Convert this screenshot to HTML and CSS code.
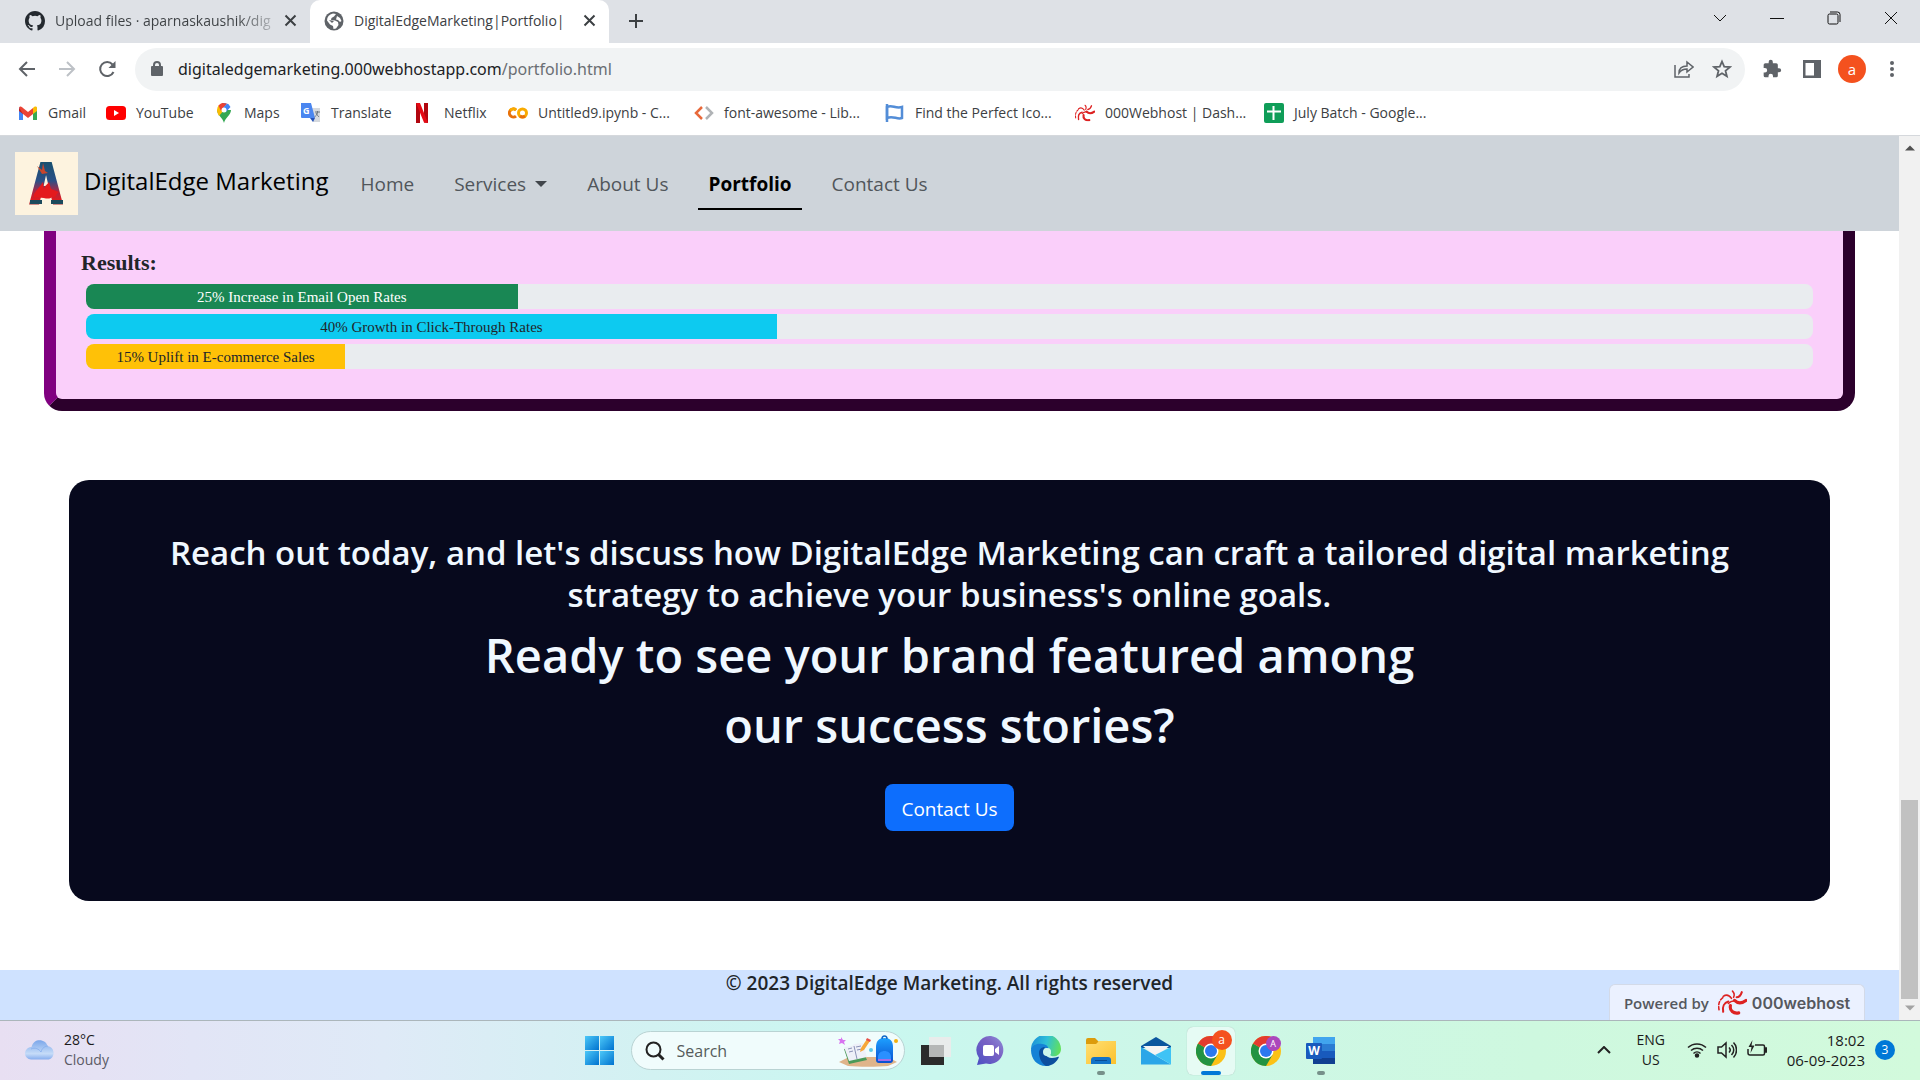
FILE: index.html
```html
<!DOCTYPE html>
<html lang="en">
<head>
<meta charset="utf-8">
<meta name="viewport" content="width=device-width, initial-scale=1">
<title>DigitalEdgeMarketing|Portfolio|</title>
<link rel="stylesheet" href="styles.css">
</head>
<body>
<svg class="defs" width="0" height="0" aria-hidden="true">
  <defs>
    <symbol id="swirl" viewBox="0 0 28 24">
      <g fill="none" stroke="#dd2222" stroke-linecap="round">
        <path d="M12 15c-1 5 3 8 8 7" stroke-width="3"/>
        <path d="M16 10c3 3 7 3 11 0" stroke-width="3"/>
        <path d="M10 13c3-3 5-3 7-2" stroke-width="1.500"/>
        <path d="M10 11c-4 1-6 5-5 10" stroke-width="2"/>
        <path d="M1 19c-1-5 0-9 4-12" stroke-width="1.500" stroke-dasharray="3 2"/>
        <path d="M13 8C11 5 8 4 5 6" stroke-width="1.500"/>
        <path d="M15 7c1-2 1-4-1-6" stroke-width="1.500"/>
        <path d="M18 7c3 0 4-2 5-5" stroke-width="2"/>
      </g>
    </symbol>
    <symbol id="chrome" viewBox="0 0 30 30">
      <circle cx="15" cy="15" r="15" fill="#fbc116"/>
      <path d="M15 15 2 7.500A15 15 0 0 0 15 30l6.500-11.200z" fill="#229342"/>
      <path d="M15 15 2 7.500a15 15 0 0 1 26 0z" fill="#e33b2e"/>
      <circle cx="15" cy="15" r="7.500" fill="#fff"/>
      <circle cx="15" cy="15" r="6" fill="#2b78ef"/>
    </symbol>
    <symbol id="cross" viewBox="0 0 12 12"><path d="M2 2l8 8M10 2l-8 8" stroke="#3c4043" stroke-width="1.600" fill="none"/></symbol>
    <linearGradient id="letter" x1="0" y1="0" x2="0" y2="1">
      <stop offset=".15" stop-color="#17506f"/><stop offset=".45" stop-color="#2b4f86"/><stop offset=".6" stop-color="#a12a4a"/><stop offset=".75" stop-color="#e01b1f"/><stop offset="1" stop-color="#1c4a5c"/>
    </linearGradient>
    <linearGradient id="win" x1="0" y1="0" x2="1" y2="1"><stop offset="0" stop-color="#4cc8f8"/><stop offset="1" stop-color="#0072cf"/></linearGradient>
    <linearGradient id="chat" x1="0" y1="1" x2="1" y2="0"><stop offset="0" stop-color="#4b4fc4"/><stop offset=".6" stop-color="#7a62c4"/><stop offset="1" stop-color="#8f8fd8"/></linearGradient>
    <linearGradient id="edge" x1="0" y1=".3" x2="1" y2=".5"><stop offset="0" stop-color="#1a8fd8"/><stop offset=".5" stop-color="#2fc0d8"/><stop offset="1" stop-color="#62e05c"/></linearGradient>
    <linearGradient id="folder" x1="0" y1="0" x2="1" y2="1"><stop offset="0" stop-color="#ffdf73"/><stop offset="1" stop-color="#fcc12d"/></linearGradient>
    <linearGradient id="cloud" x1="0" y1="0" x2="0" y2="1"><stop offset="0" stop-color="#7ba7ea"/><stop offset=".7" stop-color="#c6dcf8"/><stop offset="1" stop-color="#86adee"/></linearGradient>
    <linearGradient id="pack" x1="0" y1="0" x2="0" y2="1"><stop offset="0" stop-color="#1da0ff"/><stop offset="1" stop-color="#0a4fd0"/></linearGradient>
  </defs>
</svg>
<div class="browser">
  <div class="tabstrip">
    <div class="tab">
      <svg class="fav" viewBox="0 0 16 16" fill="#24292f"><path d="M8 0C3.580 0 0 3.580 0 8c0 3.540 2.290 6.530 5.470 7.590.4.070.55-.17.55-.38 0-.19-.01-.82-.01-1.490-2.010.37-2.530-.49-2.690-.94-.09-.23-.48-.94-.82-1.130-.28-.15-.68-.52-.01-.53.63-.01 1.080.58 1.230.82.72 1.210 1.870.87 2.330.66.07-.52.28-.87.51-1.070-1.780-.2-3.640-.89-3.640-3.950 0-.87.31-1.590.82-2.150-.08-.2-.36-1.020.08-2.120 0 0 .67-.21 2.200.82a7.600 7.600 0 0 1 4 0c1.530-1.040 2.200-.82 2.200-.82.44 1.100.16 1.920.08 2.120.51.56.82 1.270.82 2.150 0 3.070-1.870 3.750-3.650 3.950.29.25.54.73.54 1.480 0 1.070-.01 1.930-.01 2.200 0 .21.15.46.55.38A8 8 0 0 0 16 8c0-4.420-3.580-8-8-8z"/></svg>
      <span class="tab-title fade">Upload files · aparnaskaushik/dig</span>
      <button class="tab-close" aria-label="Close tab"><svg width="15" height="15"><use href="#cross"/></svg></button>
    </div>
    <div class="tab active">
      <svg class="fav" viewBox="0 0 20 20"><circle cx="10" cy="10" r="9.500" fill="#5f6368"/><path d="M9 2.500 12 3 10 5.500 7.500 7 7 9l4 .5 3 1.500.5 3-2.500 3.500-2.500.5-.5-3-3-1.500L3 9.500C3 6 5 3.500 9 2.500z" fill="#fff"/><path d="M13 5l3 2 1.500 3-1.500 1-2-2-2-.5z" fill="#fff"/><path d="M5 9l5 1-2 2z" fill="#5f6368"/></svg>
      <span class="tab-title">DigitalEdgeMarketing|Portfolio|</span>
      <button class="tab-close" aria-label="Close tab"><svg width="15" height="15"><use href="#cross"/></svg></button>
    </div>
    <button class="newtab" aria-label="New tab"><svg width="16" height="16" viewBox="0 0 16 16"><path d="M8 1v14M1 8h14" stroke="#3c4043" stroke-width="2"/></svg></button>
    <div class="winctl">
      <button aria-label="Search tabs"><svg width="14" height="14" viewBox="0 0 14 14"><path d="M1 4l6 6 6-6"/></svg></button>
      <button aria-label="Minimize"><svg width="14" height="14" viewBox="0 0 14 14"><path d="M0 7.500h14"/></svg></button>
      <button aria-label="Restore"><svg width="14" height="14" viewBox="0 0 14 14"><rect x="1" y="3" width="10" height="10" rx="1.500"/><path d="M3 1h7.500a2.500 2.500 0 0 1 2.500 2.500V11"/></svg></button>
      <button aria-label="Close"><svg width="14" height="14" viewBox="0 0 14 14"><path d="M1 1l12 12M13 1L1 13"/></svg></button>
    </div>
  </div>

  <div class="toolbar">
    <button aria-label="Back"><svg width="18" height="18" viewBox="0 0 18 18"><path d="M17 9H2M9 2L2 9l7 7" fill="none" stroke="#5f6368" stroke-width="2"/></svg></button>
    <button aria-label="Forward"><svg width="18" height="18" viewBox="0 0 18 18"><path d="M1 9h15M9 2l7 7-7 7" fill="none" stroke="#bdc1c6" stroke-width="2"/></svg></button>
    <button aria-label="Reload"><svg width="18" height="18" viewBox="0 0 18 18"><path d="M15.500 12A7 7 0 1 1 14.500 4.500" fill="none" stroke="#5f6368" stroke-width="2"/><path d="M17.500 1v7h-7z" fill="#5f6368"/></svg></button>
    <div class="omnibox">
      <svg width="12" height="16" viewBox="0 0 12 16"><path d="M3 6V4a3 3 0 0 1 6 0v2" fill="none" stroke="#5f6368" stroke-width="2"/><rect x="0" y="5" width="12" height="10" rx="1" fill="#5f6368"/></svg>
      <span class="url" role="textbox" contenteditable="true" spellcheck="false" aria-label="Address">digitaledgemarketing.000webhostapp.com<span>/portfolio.html</span></span>
      <svg class="share" width="20" height="18" viewBox="0 0 20 18" fill="none" stroke="#5f6368" stroke-width="1.500"><path d="M1 5v12h14v-3"/><path d="M5 13c0-5 3-7 8-7V2l6 5-6 5V9c-4 0-6 1-8 4z"/></svg>
      <svg width="20" height="20" viewBox="0 0 20 20"><path d="M10 2.500l2.200 5.200 5.600.4-4.300 3.700 1.400 5.500-4.900-3-4.900 3 1.400-5.500L2.200 8.100l5.600-.4z" fill="none" stroke="#5f6368" stroke-width="1.800"/></svg>
    </div>
    <button aria-label="Extensions"><svg width="20" height="20" viewBox="0 0 24 24" fill="#5f6368"><path d="M20.500 11H19V7a2 2 0 0 0-2-2h-4V3.500a2.500 2.500 0 0 0-5 0V5H4a2 2 0 0 0-2 2v3.800h1.500a2.700 2.700 0 0 1 0 5.400H2V20a2 2 0 0 0 2 2h3.800v-1.500a2.700 2.700 0 0 1 5.400 0V22H17a2 2 0 0 0 2-2v-4h1.500a2.500 2.500 0 0 0 0-5z"/></svg></button>
    <button aria-label="Side panel"><svg width="18" height="18" viewBox="0 0 18 18"><path d="M0 0h18v18H0zM2.500 3v12.500H11V3z" fill="#5f6368" fill-rule="evenodd"/></svg></button>
    <button class="avatar" aria-label="Profile">a</button>
    <button aria-label="Menu"><svg width="18" height="18" viewBox="0 0 18 18" fill="#5f6368"><circle cx="9" cy="3" r="2"/><circle cx="9" cy="9" r="2"/><circle cx="9" cy="15" r="2"/></svg></button>
  </div>

  <nav class="bookmarks" aria-label="Bookmarks">
    <a href="#"><svg viewBox="0 0 20 20"><path d="M1 4v13h4V9z" fill="#4285f4"/><path d="M19 4v13h-4V9z" fill="#34a853"/><path d="M1 5.500V8l4 3V5z" fill="#c5221f"/><path d="M15 5v6l4-3V5.500C19 3 17 3 15 5z" fill="#fbbc04"/><path d="M1 4.500C2 3 3 3 5 5l5 4 5-4v6l-5 4-5-4z" fill="#ea4335"/></svg>Gmail</a>
    <a href="#"><svg viewBox="0 0 20 20"><rect x="0" y="3" width="20" height="14" rx="3.500" fill="#f00"/><path d="M8 7v6l5-3z" fill="#fff"/></svg>YouTube</a>
    <a href="#"><svg viewBox="0 0 20 20"><path d="M10 20C9 15 3 12 3 7h14c0 5-6 8-7 13z" fill="#34a853"/><path d="M3 7a7 7 0 0 1 2-5l5 5-5 6C4 11 3 9 3 7z" fill="#fbbc04"/><path d="M4.500 2.500A7 7 0 0 1 13 .7L7 8z" fill="#ea4335"/><path d="M9 0a7 7 0 0 1 7.500 4L12 9 8 6l5-5.500z" fill="#4285f4"/><circle cx="10" cy="7" r="2.500" fill="#fff"/></svg>Maps</a>
    <a href="#"><svg viewBox="0 0 20 20"><path d="M8 5h11v14h-7z" fill="#d5d9de"/><path d="M0 0h10l4 15H1a1 1 0 0 1-1-1z" fill="#4a86f0"/><path d="M9 15h5l-2 4z" fill="#2352b8"/><text x="2" y="11" font-size="9" font-weight="700" fill="#fff">G</text><path d="M14 9h5M16.500 8v1c0 3-2 4-3 5M15 10c1 2 2 3 3 4" stroke="#6b7680" fill="none"/></svg>Translate</a>
    <a href="#"><svg class="wide" viewBox="0 0 20 20"><path d="M4 0h4v20l-4 .2zM12 0h4v20l-4-.5z" fill="#b1060f"/><path d="M4 0h4l8 20-4-.5z" fill="#e50914"/></svg>Netflix</a>
    <a href="#"><svg viewBox="0 0 20 20" fill="none" stroke-width="3"><circle cx="14.500" cy="10" r="4" stroke="#f9ab00"/><path d="M8 7a4 4 0 1 0 0 6" stroke="#e8710a"/><path d="M8 7a4 4 0 0 0-6 .5" stroke="#f9ab00"/><path d="M12 13a4 4 0 0 0 5 0" stroke="#e8710a"/></svg>Untitled9.ipynb - C...</a>
    <a href="#"><svg viewBox="0 0 20 20" fill="none" stroke-width="2.500"><path d="M8 4l-6 6 6 6" stroke="#e8693a"/><path d="M12 4l6 6-6 6" stroke="#b0b3b6"/></svg>font-awesome - Lib...</a>
    <a href="#"><svg viewBox="0 0 20 20" fill="none" stroke="#538dd7" stroke-width="2.500"><path d="M2 1v18"/><path d="M2 4c5-3 8 2 15 0v11c-5 2-9-3-15 0z"/></svg>Find the Perfect Ico...</a>
    <a href="#"><svg viewBox="0 0 28 24"><use href="#swirl"/></svg>000Webhost | Dash...</a>
    <a href="#"><svg viewBox="0 0 20 20"><rect width="20" height="20" rx="2" fill="#0f9d58"/><path d="M9.500 3v14M3 8.500h14" stroke="#fff" stroke-width="2"/></svg>July Batch - Google...</a>
  </nav>

  <div class="viewport">
    <div class="page">
      <header class="site-nav">
        <a class="brand" href="#">
          <svg class="logo" viewBox="0 0 63 63"><rect width="63" height="63" fill="#fdf3df"/><text x="31" y="51" text-anchor="middle" font-family="DejaVu Sans Mono" font-weight="700" font-size="55" fill="url(#letter)" stroke="url(#letter)" stroke-width="2">A</text><path d="M15 48h12v4H15zM36 48h12v4H36z" fill="#1c4a5c"/><path d="M22 14l5 4 1-7 2 8 3 2-6 1z" fill="#c8452c"/><path d="M19 42c3-5 6-7 9-12l1 7c1-4 3-4 5-7l2 7 8 3c-4 3-2 6-7 5-4 4-9-1-18 1z" fill="#e41a1d"/></svg>
          <span>DigitalEdge Marketing</span>
        </a>
        <nav class="links" aria-label="Main">
          <a href="#">Home</a>
          <a href="#" class="drop">Services</a>
          <a href="#">About Us</a>
          <a href="#" class="current">Portfolio</a>
          <a href="#">Contact Us</a>
        </nav>
      </header>

      <section class="case">
        <h3>Results:</h3>
        <div class="progress"><div class="bar green" style="width:25%">25% Increase in Email Open Rates</div></div>
        <div class="progress"><div class="bar cyan" style="width:40%">40% Growth in Click-Through Rates</div></div>
        <div class="progress"><div class="bar amber" style="width:15%">15% Uplift in E-commerce Sales</div></div>
      </section>

      <section class="cta">
        <h2>Reach out today, and let's discuss how DigitalEdge Marketing can craft a tailored digital marketing strategy to achieve your business's online goals.</h2>
        <h1>Ready to see your brand featured among our success stories?</h1>
        <button class="btn">Contact Us</button>
      </section>

      <footer class="site-footer">© 2023 DigitalEdge Marketing. All rights reserved</footer>
      <a class="powered" href="#">Powered by <svg width="29" height="25"><use href="#swirl"/></svg><b>000webhost</b></a>
    </div>
    <div class="scrollbar">
      <svg width="10" height="6" viewBox="0 0 10 6"><path d="M0 5.500L5 .5l5 5z" fill="#505050"/></svg>
      <div class="track"><div class="thumb"></div></div>
      <svg width="10" height="6" viewBox="0 0 10 6"><path d="M0 .5h10l-5 5z" fill="#a3a3a3"/></svg>
    </div>
  </div>
</div>

<div class="taskbar">
  <div class="weather">
    <svg width="30" height="20" viewBox="0 0 30 20"><path d="M6 19.500A6 6 0 0 1 6.500 7C8 2 11 .3 14.500.3c4 0 7 2.200 8 5.700a7 7 0 0 1 1.500 13.500z" fill="url(#cloud)"/><path d="M6 9c4-2 8 0 10 3 1-4 4-6 7-6" stroke="#86aeee" fill="none" opacity=".8"/></svg>
    <div><div>28°C</div><div class="dim">Cloudy</div></div>
  </div>
  <div class="apps">
    <button aria-label="Start"><svg viewBox="0 0 30 30" fill="url(#win)"><rect x="0" y="0" width="14" height="14"/><rect x="15" y="0" width="14" height="14"/><rect x="0" y="15" width="14" height="14"/><rect x="15" y="15" width="14" height="14"/></svg></button>
    <label class="search">
      <svg width="20" height="20" viewBox="0 0 20 20" fill="none" stroke="#222"><circle cx="8.500" cy="8.500" r="7" stroke-width="2"/><path d="M13.500 13.500l5 5" stroke-width="3"/></svg>
      <input type="text" placeholder="Search" aria-label="Search">
      <svg width="60" height="32" viewBox="0 0 60 32"><path d="M1 27l10-5h39l9 5-9 4c-10 1-30 1-40 0z" fill="#dfb48a"/><path d="M6 14l17-3 6 14-18 4z" fill="#4a9a58"/><path d="M6 12l8-1 2-2 9-1 4 14-18 4z" fill="#eef0f8"/><path d="M16 11l3 13M10 14l4-1M11 17l4-1M18 12l5-1M19 15l5-1" stroke="#8c93b8" fill="none"/><path d="M22 17l1-4 6-9 3 2-6 9z" fill="#f6a83a"/><path d="M28 5l1-2 4 2-1 2z" fill="#e8504a"/><path d="M3 2l2 3 3 0-2 2 1 3-3-2-3 1 1-3-2-2 3 0z" fill="#d873f0"/><circle cx="33" cy="15" r="2" fill="#5cc9e8"/><circle cx="58" cy="6" r="2" fill="#f4b10f"/><path d="M38 25V12c0-6 3-9 8.500-9s8.500 3 8.500 9v13c0 2-1 3-3 3H41c-2 0-3-1-3-3z" fill="url(#pack)"/><path d="M44 4c0-4 5-4 5 0" fill="none" stroke="#1468c8" stroke-width="1.500"/><path d="M40 24v-2c0-8 13-8 13 0v2z" fill="#2a90ff"/><path d="M40 24h13v2H40z" fill="#a56de8"/></svg>
    </label>
    <button aria-label="Task view"><svg viewBox="0 0 30 30"><rect x="0" y="9" width="23" height="20" fill="#2b2b2b"/><rect x="8" y="1" width="22" height="20" fill="#e9eceb"/><rect x="8" y="9" width="15" height="12" fill="#b5b7b6"/></svg></button>
    <button aria-label="Chat"><svg viewBox="0 0 30 30"><path d="M15 0a14 14 0 1 1-5 27.500L1 29l2-7A14 14 0 0 1 15 0z" fill="url(#chat)"/><rect x="7" y="9" width="11" height="11" rx="2" fill="#fff"/><path d="M19 13l4-3v9l-4-3z" fill="#fff"/></svg></button>
    <button aria-label="Edge"><svg viewBox="0 0 30 30"><path d="M0 14A15 15 0 0 1 30 13c0 7-8 9-11 6 2-2 1-8-5-8C7 10 1 12 0 14z" fill="url(#edge)"/><path d="M0 14c1-5 6-7 11-6 5 0 7 4 7 6-2-3-8-2-7 5 1 6 5 9 8 11h-4C6 30 0 23 0 14z" fill="#1582d6"/><path d="M8 17c0-4 3-6 6-6-3 4 0 11 7 11 4 0 6-2 7-1-2 5-7 9-13 9-4-2-7-8-7-13z" fill="#0d4f9e"/><circle cx="16" cy="16" r="4" fill="#cef7ec"/></svg></button>
    <button class="running" aria-label="File Explorer"><svg viewBox="0 0 30 30"><path d="M0 12V4a2 2 0 0 1 2-2h7l4 4h15v4z" fill="#dc9c0c"/><path d="M0 8h10l3-3h17v23H0z" fill="url(#folder)"/><path d="M5 28v-4a3 3 0 0 1 3-3h14a3 3 0 0 1 3 3v4z" fill="#1273c8"/><path d="M9 24.500h12" stroke="#0a4c94"/></svg></button>
    <button aria-label="Mail"><svg viewBox="0 0 30 30"><path d="M0 10L15 1l15 9v2H0z" fill="#0a569e"/><path d="M2 10h26l-13 11z" fill="#f4f4f4"/><path d="M0 11l30 17.500H0z" fill="#2ba6e8"/><path d="M30 11L14 19l16 9.500z" fill="#3fc3f5"/></svg></button>
    <button class="running focused" aria-label="Chrome"><svg viewBox="0 0 30 30"><use href="#chrome"/></svg><span class="who big">a</span></button>
    <button aria-label="Chrome profile A"><svg viewBox="0 0 30 30"><use href="#chrome"/></svg><span class="who">A</span></button>
    <button class="running" aria-label="Word"><svg viewBox="0 0 30 30"><rect x="7" y="1" width="22" height="8" fill="#41a5ee"/><rect x="7" y="8" width="22" height="7" fill="#2b7cd3"/><rect x="7" y="15" width="22" height="7" fill="#185abd"/><rect x="7" y="22" width="22" height="6" fill="#103f91"/><rect x="0" y="7" width="16" height="16" rx="1" fill="#185abd"/><text x="8" y="19" text-anchor="middle" font-size="12" font-weight="700" fill="#fff">W</text></svg></button>
  </div>
  <div class="tray">
    <svg class="up" width="14" height="8" viewBox="0 0 14 8"><path d="M1 7l6-6 6 6"/></svg>
    <div class="lang"><div>ENG</div><div>US</div></div>
    <svg width="20" height="20" viewBox="0 0 20 20"><path d="M1 7.500a13 13 0 0 1 18 0M4 10.500a9 9 0 0 1 12 0M6.500 13.500a5 5 0 0 1 7 0"/><circle cx="10" cy="15.500" r="1.500" fill="#222"/></svg>
    <svg width="20" height="20" viewBox="0 0 20 20"><path d="M1 7v6h3.500L9 17V3L4.500 7zM12 7.500c1.500 1.500 1.500 3.500 0 5M14.500 5c3 3 3 7 0 10M16.500 2.500c4 4 4 11 0 15"/></svg>
    <svg width="20" height="20" viewBox="0 0 20 20"><path d="M8 5h8a1.500 1.500 0 0 1 1.500 1.500v7A1.500 1.500 0 0 1 16 15H3a2 2 0 0 1-2-2V9"/><path d="M18 8h1.500v4H18z"/><path d="M5.500 0 1.500 7h3l-1 6 4-7.500h-3z" fill="#222" stroke="none"/></svg>
    <div class="clock"><div>18:02</div><div>06-09-2023</div></div>
    <div class="count">3</div>
  </div>
</div>
</body>
</html>
```
FILE: styles.css
```css
* { box-sizing: border-box; }
body {
  margin: 0;
  height: 100vh;
  display: flex;
  flex-direction: column;
  overflow: hidden;
  font-family: "Open Sans", "Noto Sans", sans-serif;
  font-size: 14px;
  color: #212529;
  background: #fff;
}
a { color: inherit; text-decoration: none; }
button {
  border: 0;
  padding: 0;
  background: none;
  font: inherit;
  color: inherit;
  display: flex;
  align-items: center;
  justify-content: center;
}
svg { flex: none; display: block; }
.defs { position: absolute; }
.browser { flex: 1; min-height: 0; display: flex; flex-direction: column; }

/* Tab strip */
.tabstrip { display: flex; height: 43px; background: #dee1e6; color: #3c4043; }
.tab {
  display: flex;
  align-items: center;
  width: 310px;
  padding: 0 12px 2px 25px;
}
.tab.active {
  width: 299px;
  padding: 0 12px 2px 14px;
  background: #fff;
  border-radius: 10px 10px 0 0;
}
.fav { width: 20px; height: 20px; margin-right: 10px; }
.tab-title { flex: 1; min-width: 0; white-space: nowrap; }
.fade {
  color: transparent;
  background: linear-gradient(90deg, #3c4043 82%, #c4c7cc 100%);
  -webkit-background-clip: text;
  background-clip: text;
}
.tab-close { width: 16px; height: 16px; margin-left: 5px; }
.newtab { width: 54px; padding-bottom: 1px; }
.winctl { margin-left: auto; display: flex; padding-right: 1px; }
.winctl button { width: 57px; height: 36px; }
.winctl svg { fill: none; stroke: #111; }

/* Toolbar */
.toolbar { display: flex; align-items: center; height: 52px; padding: 0 8px 0 7px; }
.toolbar button { width: 40px; height: 40px; }
.omnibox {
  flex: 1;
  display: flex;
  align-items: center;
  height: 43px;
  margin: 0 7px 0 8px;
  padding: 0 13px 0 16px;
  border-radius: 22px;
  background: #f1f3f4;
}
.url { flex: 1; padding-left: 15px; font-family: "Noto Sans", sans-serif; font-size: 16px; color: #202124; }
.url span { color: #6a6e73; }
.share { margin-right: 18px; }
.toolbar .avatar {
  width: 28px;
  height: 28px;
  margin: 0 6px;
  border-radius: 50%;
  background: #f4511e;
  color: #fff;
  font-size: 15px;
}

/* Bookmarks */
.bookmarks {
  display: grid;
  grid-template-columns: 88px 108px 87px 109px 98px 186px 191px 190px 189px auto;
  height: 41px;
  padding-left: 18px;
  padding-bottom: 5px;
  border-bottom: 1px solid #d5d8dc;
  color: #3c4043;
}
.bookmarks a { display: flex; align-items: center; gap: 10px; white-space: nowrap; }
.bookmarks svg { width: 20px; height: 20px; }
.bookmarks .wide { width: 24px; }

/* Web page */
.viewport { flex: 1; min-height: 0; display: flex; }
.page { flex: 1; position: relative; display: flex; flex-direction: column; overflow: hidden; }
.site-nav {
  display: flex;
  align-items: center;
  height: 95px;
  padding-left: 15px;
  background: #ced4da;
}
.brand { display: flex; align-items: center; gap: 6px; font-size: 24px; line-height: 30px; color: #000; }
.brand span { padding-bottom: 5px; }
.logo { width: 63px; height: 63px; }
.links { display: flex; gap: 20px; margin-left: 22px; }
.links a {
  padding: 11px 10px 9px;
  font-size: 19px;
  line-height: 30px;
  color: #51565b;
  border-bottom: 2px solid transparent;
}
.links .current { font-weight: 700; color: #000; border-color: #000; }
.links .drop { display: flex; align-items: center; gap: 9px; }
.drop::after {
  content: "";
  border: 6px solid transparent;
  border-top-color: #41464b;
  border-bottom: 0;
}

.case {
  margin: 0 44px;
  padding: 15px 30px 30px 25px;
  border: 12px solid #2c002c;
  border-top: 0;
  border-left-color: #800080;
  border-radius: 0 0 18px 18px;
  background: #facffa;
  font-family: "Liberation Serif", serif;
}
.case h3 { margin: 0 0 5px; font-size: 22px; line-height: 33px; }
.progress {
  height: 25px;
  margin: 0 0 5px 5px;
  border-radius: 8px;
  overflow: hidden;
  background: #e9ecef;
}
.progress:last-child { margin-bottom: 0; }
.bar { height: 100%; text-align: center; font-size: 15px; line-height: 26px; white-space: nowrap; }
.green { background: #198754; color: #fff; }
.cyan { background: #0dcaf0; }
.amber { background: #ffc107; }

.cta {
  display: flex;
  flex-direction: column;
  align-items: center;
  margin: 69px 69px 0;
  padding: 52px 50px 70px;
  border-radius: 20px;
  background: #07091d;
  color: #f0f8ff;
  text-align: center;
}
.cta h2 { margin: 0 0 4px; font-size: 33px; line-height: 42px; font-weight: 600; }
.cta h1 { margin: 0 0 24px; max-width: 1000px; font-size: 47px; line-height: 70px; font-weight: 600; }
.btn {
  height: 47px;
  padding: 2px 16px 0;
  border-radius: 8px;
  background: #0d6efd;
  color: #fff;
  font-size: 19px;
}
.site-footer {
  margin-top: 69px;
  flex: 1;
  background: #cfe2ff;
  text-align: center;
  font-size: 19px;
  line-height: 26px;
  font-weight: 600;
}
.powered {
  position: absolute;
  right: 34px;
  bottom: 0;
  display: flex;
  align-items: center;
  justify-content: center;
  gap: 9px;
  width: 256px;
  height: 36px;
  border: 1px solid #d3dae8;
  border-bottom: 0;
  border-radius: 6px 6px 0 0;
  background: #ebf1ff;
  color: #55585e;
  font-size: 15px;
  font-weight: 600;
}
.powered b { margin-left: -4px; font-family: "Inter", sans-serif; font-size: 16px; font-weight: 600; }

.scrollbar {
  width: 21px;
  display: flex;
  flex-direction: column;
  align-items: center;
  padding: 9px 0;
  background: #f1f1f1;
}
.track { flex: 1; width: 17px; display: flex; flex-direction: column; justify-content: flex-end; padding: 6px 0; }
.thumb { height: 199px; background: #c1c1c1; }

/* Taskbar */
.taskbar {
  height: 60px;
  display: grid;
  grid-template-columns: 1fr auto 1fr;
  align-items: center;
  border-top: 1px solid #abb6bb;
  background: linear-gradient(90deg, #e8dff2 0, #e2e5f6 10%, #dfeaf7 20%, #d2f2f2 34%, #c9f7f0 45%, #cdf7e8 60%, #cef8df 80%, #d2fadc 100%);
  color: #1b1b1b;
}
.weather { display: flex; align-items: center; gap: 9px; padding: 0 0 2px 25px; line-height: 20px; }
.dim { color: #5b5b66; }
.apps { display: flex; gap: 7px; }
.apps button { position: relative; width: 48px; height: 48px; border-radius: 6px; }
.apps button > svg { width: 30px; height: 30px; }
.search {
  display: flex;
  align-items: center;
  width: 274px;
  height: 39px;
  align-self: center;
  padding: 0 6px 0 13px;
  border: 1px solid #b9d3d3;
  border-radius: 20px;
  background: #f0fcfc;
}
.search input {
  flex: 1;
  min-width: 0;
  padding: 0 0 0 12px;
  border: 0;
  background: none;
  font: 16px "Open Sans", sans-serif;
}
.search input::placeholder { color: #555b5b; }
.focused { background: #e6fbf4; box-shadow: 0 0 1px #9fb8b0; }
.running::after {
  content: "";
  position: absolute;
  bottom: 0;
  width: 8px;
  height: 4px;
  border-radius: 2px;
  background: #76908a;
}
.focused::after { width: 20px; background: #0078d7; }
.who {
  position: absolute;
  top: 9px;
  right: 9px;
  width: 15px;
  height: 15px;
  border-radius: 50%;
  background: #ab47bc;
  color: #fff;
  font-size: 9px;
  line-height: 15px;
  text-align: center;
}
.big { top: 3px; right: 3px; width: 20px; height: 20px; background: #f4511e; font-size: 12px; line-height: 19px; }
.tray { display: flex; align-items: center; justify-content: flex-end; gap: 10px; padding: 0 25px 2px 0; line-height: 20px; }
.tray svg { fill: none; stroke: #222; stroke-width: 1.5; }
.tray .up { margin-right: 16px; stroke-width: 2; }
.lang { margin-right: 12px; text-align: center; }
.clock { width: 88px; text-align: right; font-size: 15px; }
.count {
  width: 20px;
  height: 20px;
  border-radius: 50%;
  background: #0078d7;
  color: #fff;
  font-size: 12px;
  text-align: center;
}
```
